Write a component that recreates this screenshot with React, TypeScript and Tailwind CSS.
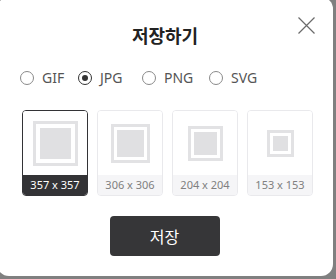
import React, { useState } from "react";

const sizes = [
  { label: "357 x 357", frame: 45, gap: 4, fill: 31 },
  { label: "306 x 306", frame: 39, gap: 3, fill: 27 },
  { label: "204 x 204", frame: 35, gap: 3, fill: 23 },
  { label: "153 x 153", frame: 27, gap: 3, fill: 15 },
];

const formats = [
  { f: "GIF", w: "w-[58px]" },
  { f: "JPG", w: "w-[64px]" },
  { f: "PNG", w: "w-[67px]" },
  { f: "SVG", w: "w-[60px]" },
];

export default function App() {
  const [fmt, setFmt] = useState("JPG");
  const [sel, setSel] = useState(0);
  return (
    <div
      className="w-[336px] h-[279px] overflow-hidden bg-[#808080]"
      style={{ fontFamily: '"Noto Sans", "Noto Sans CJK KR", sans-serif' }}
    >
      <div className="relative -mt-[3px] -ml-[3px] w-[336px] h-[279px] rounded-[12px] bg-white flex flex-col">
        <div
          className="pt-[26px] text-center text-[18px] leading-[24px] font-bold text-[#222]"
          style={{ fontFamily: '"Noto Sans CJK KR", sans-serif' }}
        >
          저장하기
        </div>
        <button className="absolute left-[301px] top-[20px] w-[17px] h-[17px]">
          <svg width="17" height="17" viewBox="0 0 17 17">
            <path d="M0.5 0.5 L16.5 16.5 M16.5 0.5 L0.5 16.5" stroke="#6b6b6b" strokeWidth="1.2" fill="none" />
          </svg>
        </button>
        <div className="mt-[24px] pl-[23px] flex items-center h-[14px]">
          {formats.map(({ f, w }) => (
            <label key={f} onClick={() => setFmt(f)} className={`flex items-center cursor-pointer shrink-0 ${w}`}>
              <span
                className={`w-[14px] h-[14px] rounded-full border flex items-center justify-center ${
                  fmt === f ? "border-[#333]" : "border-[#8a8a8a]"
                }`}
              >
                {fmt === f && <span className="w-[6px] h-[6px] rounded-full bg-[#333]" />}
              </span>
              <span className="ml-[8px] text-[14px] leading-[14px] text-[#555]">{f}</span>
            </label>
          ))}
        </div>
        <div className="mt-[25px] pl-[25px] flex gap-[9px]">
          {sizes.map((s, i) => {
            const active = sel === i;
            return (
              <div
                key={s.label}
                onClick={() => setSel(i)}
                className={`w-[66px] h-[86px] rounded-[4px] border overflow-hidden flex flex-col cursor-pointer ${
                  active ? "border-[#333336]" : "border-[#e9e9ec]"
                }`}
              >
                <div className="flex-1 flex items-center justify-center bg-white">
                  <div
                    className="border-[3px] border-[#e2e2e4] flex items-center justify-center"
                    style={{ width: s.frame, height: s.frame }}
                  >
                    <div className="bg-[#e0e0e2]" style={{ width: s.fill, height: s.fill }} />
                  </div>
                </div>
                <div
                  className={`h-[20px] flex items-center justify-center text-[11px] ${
                    active ? "bg-[#333336] text-white" : "bg-[#f5f5f7] text-[#808080]"
                  }`}
                >
                  {s.label}
                </div>
              </div>
            );
          })}
        </div>
        <div className="mt-[20px] flex justify-center pr-[1px]">
          <button
            className="w-[110px] h-[40px] rounded-[4px] bg-[#363638] text-white text-[16px]"
            style={{ fontFamily: '"Noto Sans CJK KR", sans-serif' }}
          >
            저장
          </button>
        </div>
      </div>
    </div>
  );
}
